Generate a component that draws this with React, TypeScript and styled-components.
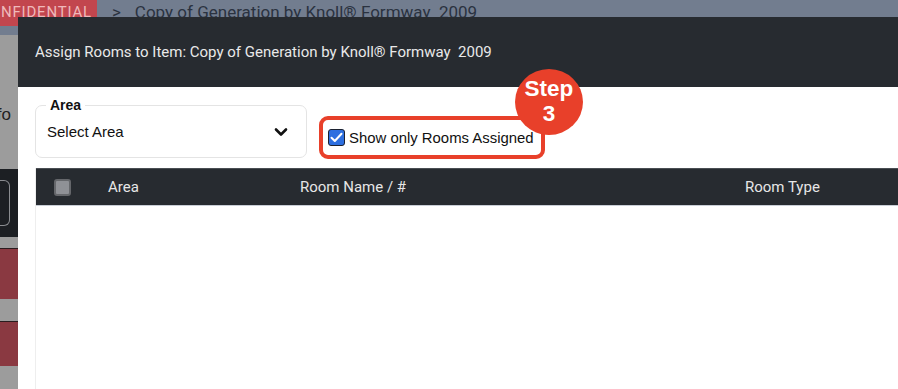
import React from 'react'
import styled, { createGlobalStyle } from 'styled-components'

const GlobalStyle = createGlobalStyle`
  html, body {
    margin: 0;
    padding: 0;
    width: 898px;
    height: 389px;
    overflow: hidden;
    background: #9c9c9c;
    font-family: 'Liberation Sans', Arial, sans-serif;
  }
`

const Page = styled.div`
  position: relative;
  width: 898px;
  height: 389px;
  overflow: hidden;
  background: #9c9c9c;
`

const TopBar = styled.div`
  height: 35px;
  background: #727d8f;
  display: flex;
  align-items: flex-start;
`

const Badge = styled.div`
  height: 26px;
  background: #c2464e;
  border-radius: 0 0 6px 0;
  color: #efb9bb;
  font-family: Roboto, 'Liberation Sans', sans-serif;
  font-size: 15px;
  letter-spacing: 0.8px;
  line-height: 25px;
  padding: 0 5px 0 1px;
  white-space: nowrap;
`

const Crumbs = styled.div`
  display: flex;
  align-items: center;
  gap: 14px;
  margin-left: 15px;
  height: 24px;
  color: #2a3240;
  font-family: Roboto, 'Liberation Sans', sans-serif;
  font-size: 17px;
  white-space: pre;
`

const SideRail = styled.div`
  width: 18px;
  display: flex;
  flex-direction: column;
`

const RailText = styled.div`
  height: 24px;
  margin-top: 68px;
  color: #222;
  font-size: 17px;
  line-height: 24px;
  text-align: right;
  padding-right: 7px;
  white-space: nowrap;
  overflow: hidden;
  direction: rtl;
`

const RailDark = styled.div`
  margin-top: 42px;
  height: 68px;
  background: #1c1f23;
  display: flex;
  align-items: center;
`

const RailOutline = styled.div`
  width: 9px;
  height: 44px;
  border: 1px solid #8a8c90;
  border-left: none;
  border-radius: 0 6px 6px 0;
`

const RailRed = styled.div<{ $top: number; $height: number }>`
  margin-top: ${p => p.$top}px;
  height: ${p => p.$height}px;
  background: #8a3941;
  border-top: 1px solid #2a1c1e;
`

const Modal = styled.div`
  position: absolute;
  top: 17px;
  left: 18px;
  right: 0;
  bottom: 0;
  background: #ffffff;
  display: flex;
  flex-direction: column;
`

const ModalHeader = styled.div`
  height: 70px;
  background: #272b30;
  display: flex;
  align-items: center;
  padding-left: 17px;
  color: #e9e9e9;
  font-family: Roboto, 'Liberation Sans', sans-serif;
  font-size: 15px;
  white-space: pre;
`

const ModalBody = styled.div`
  flex: 1;
  padding: 17px 0 0 17px;
  display: flex;
  flex-direction: column;
`

const Filters = styled.div`
  display: flex;
  align-items: flex-end;
  gap: 12px;
  height: 54px;
`

const SelectBox = styled.div`
  position: relative;
  width: 272px;
  height: 53px;
  box-sizing: border-box;
  border: 1px solid #e4e4e4;
  border-radius: 7px;
  display: flex;
  align-items: center;
  justify-content: space-between;
  padding: 0 18px 0 11px;
  color: #111;
  font-size: 15px;
`

const Legend = styled.span`
  position: absolute;
  top: -9px;
  left: 10px;
  padding: 0 4px;
  background: #fff;
  font-size: 14px;
  font-weight: bold;
  line-height: 16px;
  color: #111;
`

const Highlight = styled.div`
  position: relative;
  width: 226px;
  height: 43px;
  box-sizing: border-box;
  border: 4px solid #e8402a;
  border-radius: 9px;
  display: flex;
  align-items: center;
  gap: 4px;
  padding-left: 5px;
  margin-bottom: -1px;
  font-size: 14.9px;
  color: #111;
  white-space: nowrap;
`

const CheckBox = styled.span<{ $checked?: boolean }>`
  width: 17px;
  height: 17px;
  box-sizing: border-box;
  border-radius: 3px;
  flex: none;
  display: flex;
  align-items: center;
  justify-content: center;
  background: ${p => (p.$checked ? '#2d6fe0' : '#8f9196')};
  border: ${p => (p.$checked ? '1px solid #1b2130' : '2px solid #65676b')};
`

const StepBadge = styled.div`
  position: absolute;
  left: 192px;
  top: -51px;
  width: 68px;
  height: 66px;
  border-radius: 50%;
  background: #e8402a;
  color: #fff;
  font-weight: bold;
  font-size: 22.5px;
  line-height: 25px;
  display: flex;
  flex-direction: column;
  align-items: center;
  justify-content: center;
  padding-bottom: 2px;
  box-sizing: border-box;
`

const Table = styled.div`
  margin-top: 10px;
  flex: 1;
  display: flex;
  flex-direction: column;
  border-left: 1px solid #eeeeee;
`

const HeadRow = styled.div`
  height: 38px;
  box-sizing: border-box;
  background: #272b30;
  border-top: 1px solid #4a4e53;
  border-bottom: 1px solid #c9ced6;
  display: grid;
  grid-template-columns: 72px 192px 445px 1fr;
  align-items: center;
  color: #e6e6e6;
  font-family: Roboto, 'Liberation Sans', sans-serif;
  font-size: 15px;
`

const HeadCheck = styled.div`
  padding-left: 18px;
  display: flex;
`

const Chevron = () => (
  <svg width="14" height="10" viewBox="0 0 14 10">
    <path d="M2 2.5 L7 7.5 L12 2.5" fill="none" stroke="#111" strokeWidth="2.6" strokeLinecap="round" strokeLinejoin="round" />
  </svg>
)

const Tick = () => (
  <svg width="13" height="11" viewBox="0 0 13 11">
    <path d="M1.5 5.8 L4.8 9 L11.5 1.8" fill="none" stroke="#fff" strokeWidth="2" strokeLinecap="round" strokeLinejoin="round" />
  </svg>
)

export default function App() {
  return (
    <Page>
      <GlobalStyle />
      <TopBar>
        <Badge>NFIDENTIAL</Badge>
        <Crumbs>
          <span>&gt;</span>
          <span>Copy of Generation by Knoll® Formway  2009</span>
        </Crumbs>
      </TopBar>
      <SideRail>
        <RailText>Info</RailText>
        <RailDark>
          <RailOutline />
        </RailDark>
        <RailRed $top={11} $height={50} />
        <RailRed $top={22} $height={44} />
      </SideRail>

      <Modal>
        <ModalHeader>Assign Rooms to Item: Copy of Generation by Knoll® Formway  2009</ModalHeader>
        <ModalBody>
          <Filters>
            <SelectBox>
              <Legend>Area</Legend>
              <span>Select Area</span>
              <Chevron />
            </SelectBox>
            <Highlight>
              <CheckBox $checked>
                <Tick />
              </CheckBox>
              <span>Show only Rooms Assigned</span>
              <StepBadge>
                <span>Step</span>
                <span>3</span>
              </StepBadge>
            </Highlight>
          </Filters>
          <Table>
            <HeadRow>
              <HeadCheck>
                <CheckBox />
              </HeadCheck>
              <span>Area</span>
              <span>Room Name / #</span>
              <span>Room Type</span>
            </HeadRow>
          </Table>
        </ModalBody>
      </Modal>
    </Page>
  )
}
